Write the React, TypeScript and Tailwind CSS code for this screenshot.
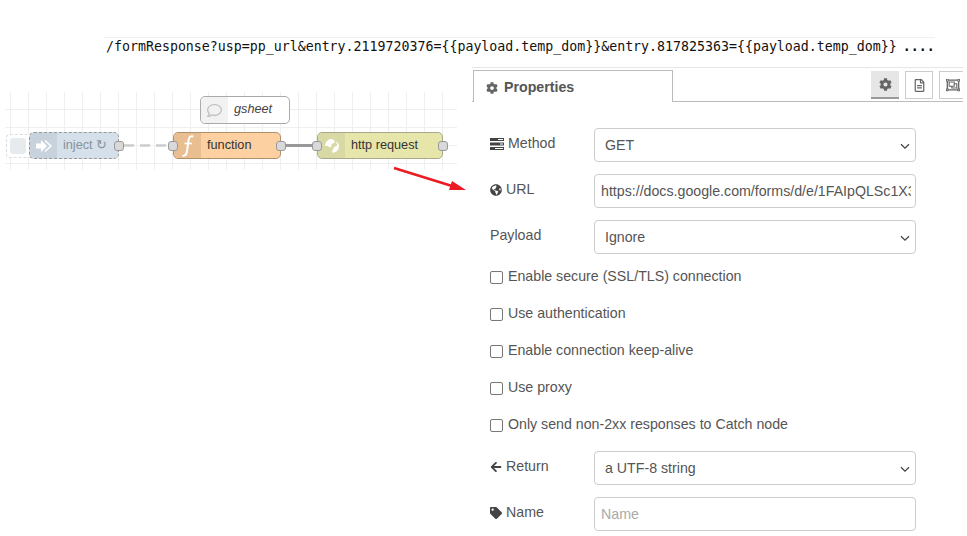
import type { ReactNode } from 'react';
import { FaCog, FaGlobeAmericas, FaRegFileAlt, FaArrowLeft, FaTag, FaRegObjectGroup, FaRegComment } from 'react-icons/fa';

const SANS = 'font-["Liberation_Sans",Arial,sans-serif]';

function TasksIcon() {
  return (
    <svg width="14" height="12" viewBox="0 0 14 12" className="text-[#444]">
      <rect x="0" y="0" width="14" height="3" fill="currentColor" />
      <rect x="0" y="4.5" width="14" height="3" fill="currentColor" />
      <rect x="0" y="9" width="14" height="3" fill="currentColor" />
      <rect x="8" y="1" width="5" height="1" fill="#fff" />
      <rect x="10" y="5.5" width="3" height="1" fill="#fff" />
      <rect x="5" y="10" width="8" height="1" fill="#fff" />
    </svg>
  );
}

function InjectArrow() {
  return (
    <svg width="16" height="14" viewBox="0 0 16 14">
      <path d="M0 4.5H5V1L11 7 5 13V9.5H0Z" fill="#fff" />
      <path d="M9 1.5 15 7 9 12.5" fill="none" stroke="#fff" strokeWidth="1.5" />
    </svg>
  );
}

function FunctionGlyph() {
  return (
    <svg width="14" height="24" viewBox="0 0 14 24">
      <path d="M12.5 2.5C9.5 1.5 8 3 7.5 6.5L6 17C5.5 20.5 4 22.5 1.5 21.5" fill="none" stroke="#fff" strokeWidth="2" />
      <path d="M3.5 9.5H11" stroke="#fff" strokeWidth="1.6" />
    </svg>
  );
}

function AfricaGlobe() {
  return (
    <svg width="16" height="16" viewBox="0 0 16 16">
      <path d="M7 1C3.5 1.5 1 4.5 1 8c1 0 1.5-.5 2.5 0l2 1c1.5.5 2.5-.5 2-2-.5-1 .5-1.5 1.5-1.5s2-1 1.5-2.5S8.500.800 7 1Z" fill="#fff" />
      <path d="M12.500 3.500c1.500 1 2.500 3 2.500 4.500 0 2-1 4-2.500 5.500-1.500 1-3 1.500-4 1-1-1 0-2 .5-3s1-2.500 2-3 2.500-.5 2-2-1-1.500-.5-3Z" fill="#fff" />
    </svg>
  );
}

function Port({ className }: { className: string }) {
  return <div className={`absolute top-[8px] w-[10px] h-[10px] rounded-[3px] border border-[#999] bg-[#d9d9d9] ${className}`} />;
}

function FlowCanvas() {
  return (
    <div className="relative w-[472px] h-[470px] shrink-0">
      {/* grid */}
      <div className="absolute left-[5px] top-[26px] w-[452px] h-[78px] bg-[linear-gradient(to_right,#efefef_1px,transparent_1px),linear-gradient(to_bottom,#efefef_1px,transparent_1px)] bg-[size:18px_18px] bg-[position:5px_17px]" />

      {/* links */}
      <svg className="absolute left-0 top-0" width="472" height="200">
        <line x1="124" y1="79.500" x2="168" y2="79.500" stroke="#cccccc" strokeWidth="2.500" strokeDasharray="10 6" />
        <line x1="285" y1="79.500" x2="313" y2="79.500" stroke="#999" strokeWidth="3" />
        <line x1="394" y1="102" x2="452" y2="120" stroke="#ed1c24" strokeWidth="2.500" />
        <polygon points="466,124 449,124 452,115" fill="#ed1c24" />
      </svg>

      {/* inject button */}
      <div className="absolute left-[6px] top-[68px] w-[29px] h-[24px] rounded-[4px] border border-dashed border-[#dddddd] bg-white pl-[3px] flex items-center">
        <div className="w-[16px] h-[16px] rounded-[3px] bg-[#e8ebee]" />
      </div>

      {/* inject */}
      <div className={`absolute left-[29px] top-[66px] w-[90px] h-[27px] rounded-[5px] border border-dashed border-[#999999] bg-[#d5e0ea] flex items-center ${SANS}`}>
        <div className="w-[27px] h-full rounded-l-[5px] bg-[#c8d2dc] flex items-center justify-center">
          <InjectArrow />
        </div>
        <span className="ml-[6px] text-[12.700px] text-[#88929c]">inject ↻</span>
        <Port className="right-[-6px] bg-[#d5d5d5]" />
      </div>

      {/* function */}
      <div className={`absolute left-[173px] top-[66px] w-[108px] h-[27px] rounded-[5px] border border-[#b08f6c] bg-[#fdd0a2] flex items-center ${SANS}`}>
        <div className="w-[27px] h-full rounded-l-[5px] bg-[#e9bf92] flex items-center justify-center">
          <FunctionGlyph />
        </div>
        <span className="ml-[6px] text-[12.700px] text-[#333]">function</span>
        <Port className="left-[-6px]" />
        <Port className="right-[-6px]" />
      </div>

      {/* http request */}
      <div className={`absolute left-[317px] top-[66px] w-[126px] h-[27px] rounded-[5px] border border-[#a8a88a] bg-[#e6e6ab] flex items-center ${SANS}`}>
        <div className="w-[27px] h-full rounded-l-[5px] bg-[#d9d9a6] flex items-center justify-center">
          <AfricaGlobe />
        </div>
        <span className="ml-[6px] text-[12.700px] text-[#333]">http request</span>
        <Port className="left-[-6px]" />
        <Port className="right-[-6px]" />
      </div>

      {/* comment */}
      <div className={`absolute left-[200px] top-[30px] w-[90px] h-[28px] rounded-[5px] border border-[#aaaaaa] bg-white flex items-center ${SANS}`}>
        <div className="w-[27px] h-full rounded-l-[5px] bg-[#f2f2f2] flex items-center justify-center">
          <FaRegComment className="text-[#c4c4c4] text-[15px]" />
        </div>
        <span className="ml-[6px] text-[12.700px] italic text-[#444]">gsheet</span>
      </div>
    </div>
  );
}

function Field({ icon, label, children, className }: { icon?: ReactNode; label: string; children: ReactNode; className: string }) {
  return (
    <div className={`flex items-center ${className}`}>
      <label className="w-[104px] mb-[2px] flex items-center gap-[4px] text-[14.200px] text-[#555]">
        {icon}
        {label}
      </label>
      {children}
    </div>
  );
}

function FakeSelect({ value }: { value: string }) {
  return (
    <div className="w-[322px] h-[34px] rounded-[4px] border border-[#cccccc] bg-white flex items-center justify-between pt-[2px] pl-[10px] pr-[5px] text-[14.200px] text-[#555]">
      {value}
      <svg width="10" height="7" viewBox="0 0 10 7"><path d="M1 1.200 5 5.200 9 1.200" fill="none" stroke="#444" strokeWidth="1.300" /></svg>
    </div>
  );
}

function TextBox({ value, placeholder }: { value?: string; placeholder?: string }) {
  return (
    <div className={`w-[322px] h-[34px] rounded-[4px] border border-[#cccccc] bg-white pt-[2px] pl-[6px] text-[14.200px] ${placeholder ? 'text-[#aaaaaa]' : 'text-[#555]'}`}>
      <div className="w-[310px] h-full flex items-center overflow-hidden whitespace-nowrap">{value ?? placeholder}</div>
    </div>
  );
}

function Check({ label, className }: { label: string; className: string }) {
  return (
    <div className={`flex items-center gap-[5px] text-[14.200px] text-[#555] h-[20px] ${className}`}>
      <div className="w-[13px] h-[13px] rounded-[2px] border border-[#777] bg-white" />
      {label}
    </div>
  );
}

function PropertiesPanel() {
  return (
    <div className={`w-[491px] overflow-hidden pt-[1px] ${SANS}`}>
      <div className="border-t border-[#e6e6e6]">
        <div className="flex items-end h-[35px] border-b border-[#bbbbbb] mt-[-1px] pt-[4px]">
          <div className="w-[200px] h-[32px] ml-[1px] mb-[-1px] pt-[2px] border border-b-0 border-[#bbbbbb] bg-white flex items-center gap-[6px] pl-[12px] text-[14.200px] font-bold text-[#555]">
            <FaCog className="text-[#666] text-[12px]" />
            Properties
          </div>
          <div className="ml-auto flex gap-[6px] mr-[-4px] mb-[2px]">
            <div className="w-[28px] h-[28px] bg-[#e6e6e6] border-b-2 border-[#999] flex items-center justify-center">
              <FaCog className="text-[#666] text-[13px]" />
            </div>
            <div className="w-[28px] h-[28px] border border-[#cccccc] flex items-center justify-center">
              <FaRegFileAlt className="text-[#666] text-[13px]" />
            </div>
            <div className="w-[28px] h-[28px] border border-[#cccccc] flex items-center justify-center">
              <FaRegObjectGroup className="text-[#666] text-[14px]" />
            </div>
          </div>
        </div>

        <div className="pl-[18px]">
          <Field className="mt-[26px]" icon={<TasksIcon />} label="Method"><FakeSelect value="GET" /></Field>
          <Field className="mt-[12px]" icon={<FaGlobeAmericas className="text-[#444] text-[12px]" />} label="URL">
            <TextBox value="https://docs.google.com/forms/d/e/1FAIpQLSc1X3" />
          </Field>
          <Field className="mt-[12px]" label="Payload"><FakeSelect value="Ignore" /></Field>
          <Check className="mt-[13px]" label="Enable secure (SSL/TLS) connection" />
          <Check className="mt-[17px]" label="Use authentication" />
          <Check className="mt-[17px]" label="Enable connection keep-alive" />
          <Check className="mt-[17px]" label="Use proxy" />
          <Check className="mt-[17px]" label="Only send non-2xx responses to Catch node" />
          <Field className="mt-[16px]" icon={<FaArrowLeft className="text-[#444] text-[12px]" />} label="Return"><FakeSelect value="a UTF-8 string" /></Field>
          <Field className="mt-[12px]" icon={<FaTag className="text-[#444] text-[12px]" />} label="Name"><TextBox placeholder="Name" /></Field>
        </div>
      </div>
    </div>
  );
}

export default function App() {
  return (
    <div className="w-[967px] h-[536px] bg-white overflow-hidden">
      <div className="h-[66px] pt-[37px] pl-[104px] pr-[32px]">
        <div className="border-t border-[#f0f0f0] pl-[2px] flex items-start font-['DejaVu_Sans_Mono',monospace] text-[13.270px] leading-[18px] text-[#111] whitespace-nowrap">
          <span>{'/formResponse?usp=pp_url&entry.2119720376={{payload.temp_dom}}&entry.817825363={{payload.temp_dom}}'}</span>
          <span className="ml-[6px] font-bold">....</span>
        </div>
      </div>
      <div className="flex">
        <FlowCanvas />
        <PropertiesPanel />
      </div>
    </div>
  );
}
